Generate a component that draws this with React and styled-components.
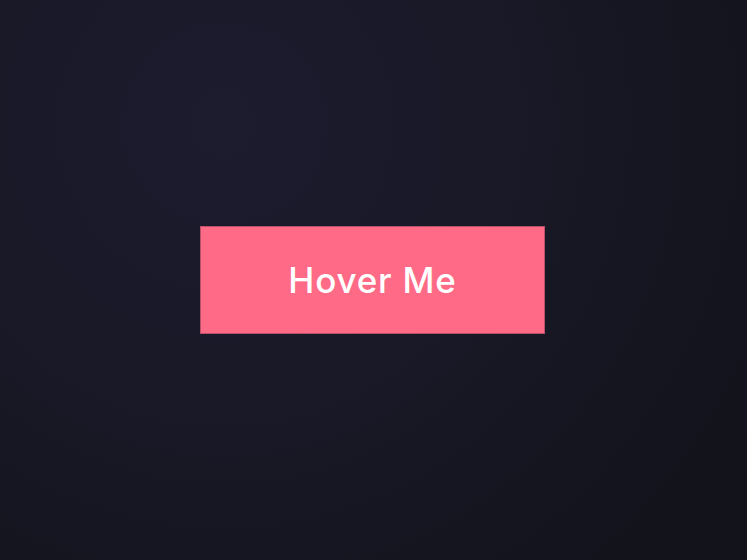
import styled, { createGlobalStyle } from 'styled-components';

const GlobalStyle = createGlobalStyle`
  html, body {
    margin: 0;
    padding: 0;
    height: 100%;
  }
  #root {
    height: 100%;
  }
`;

const Page = styled.div`
  width: 100%;
  height: 100vh;
  box-sizing: border-box;
  padding-right: 2px;
  display: flex;
  align-items: center;
  justify-content: center;
  background: radial-gradient(circle at 30% 22%, #1d1c2f 0%, #181826 45%, #12121a 100%);
`;

const HoverButton = styled.button`
  width: 345px;
  height: 108px;
  padding: 0;
  border: 1px solid #b8506a;
  background-color: #ff6b87;
  color: #ffffff;
  font-family: 'Inter', 'Noto Sans', sans-serif;
  font-weight: 500;
  font-size: 35px;
  letter-spacing: 0.8px;
  cursor: pointer;
  box-sizing: border-box;
  transition: all 0.2s ease;

  &:hover {
    background-color: #ff5577;
  }
`;

const App = () => {
  return (
    <>
      <GlobalStyle />
      <Page>
        <HoverButton>Hover Me</HoverButton>
      </Page>
    </>
  );
};

export default App;
